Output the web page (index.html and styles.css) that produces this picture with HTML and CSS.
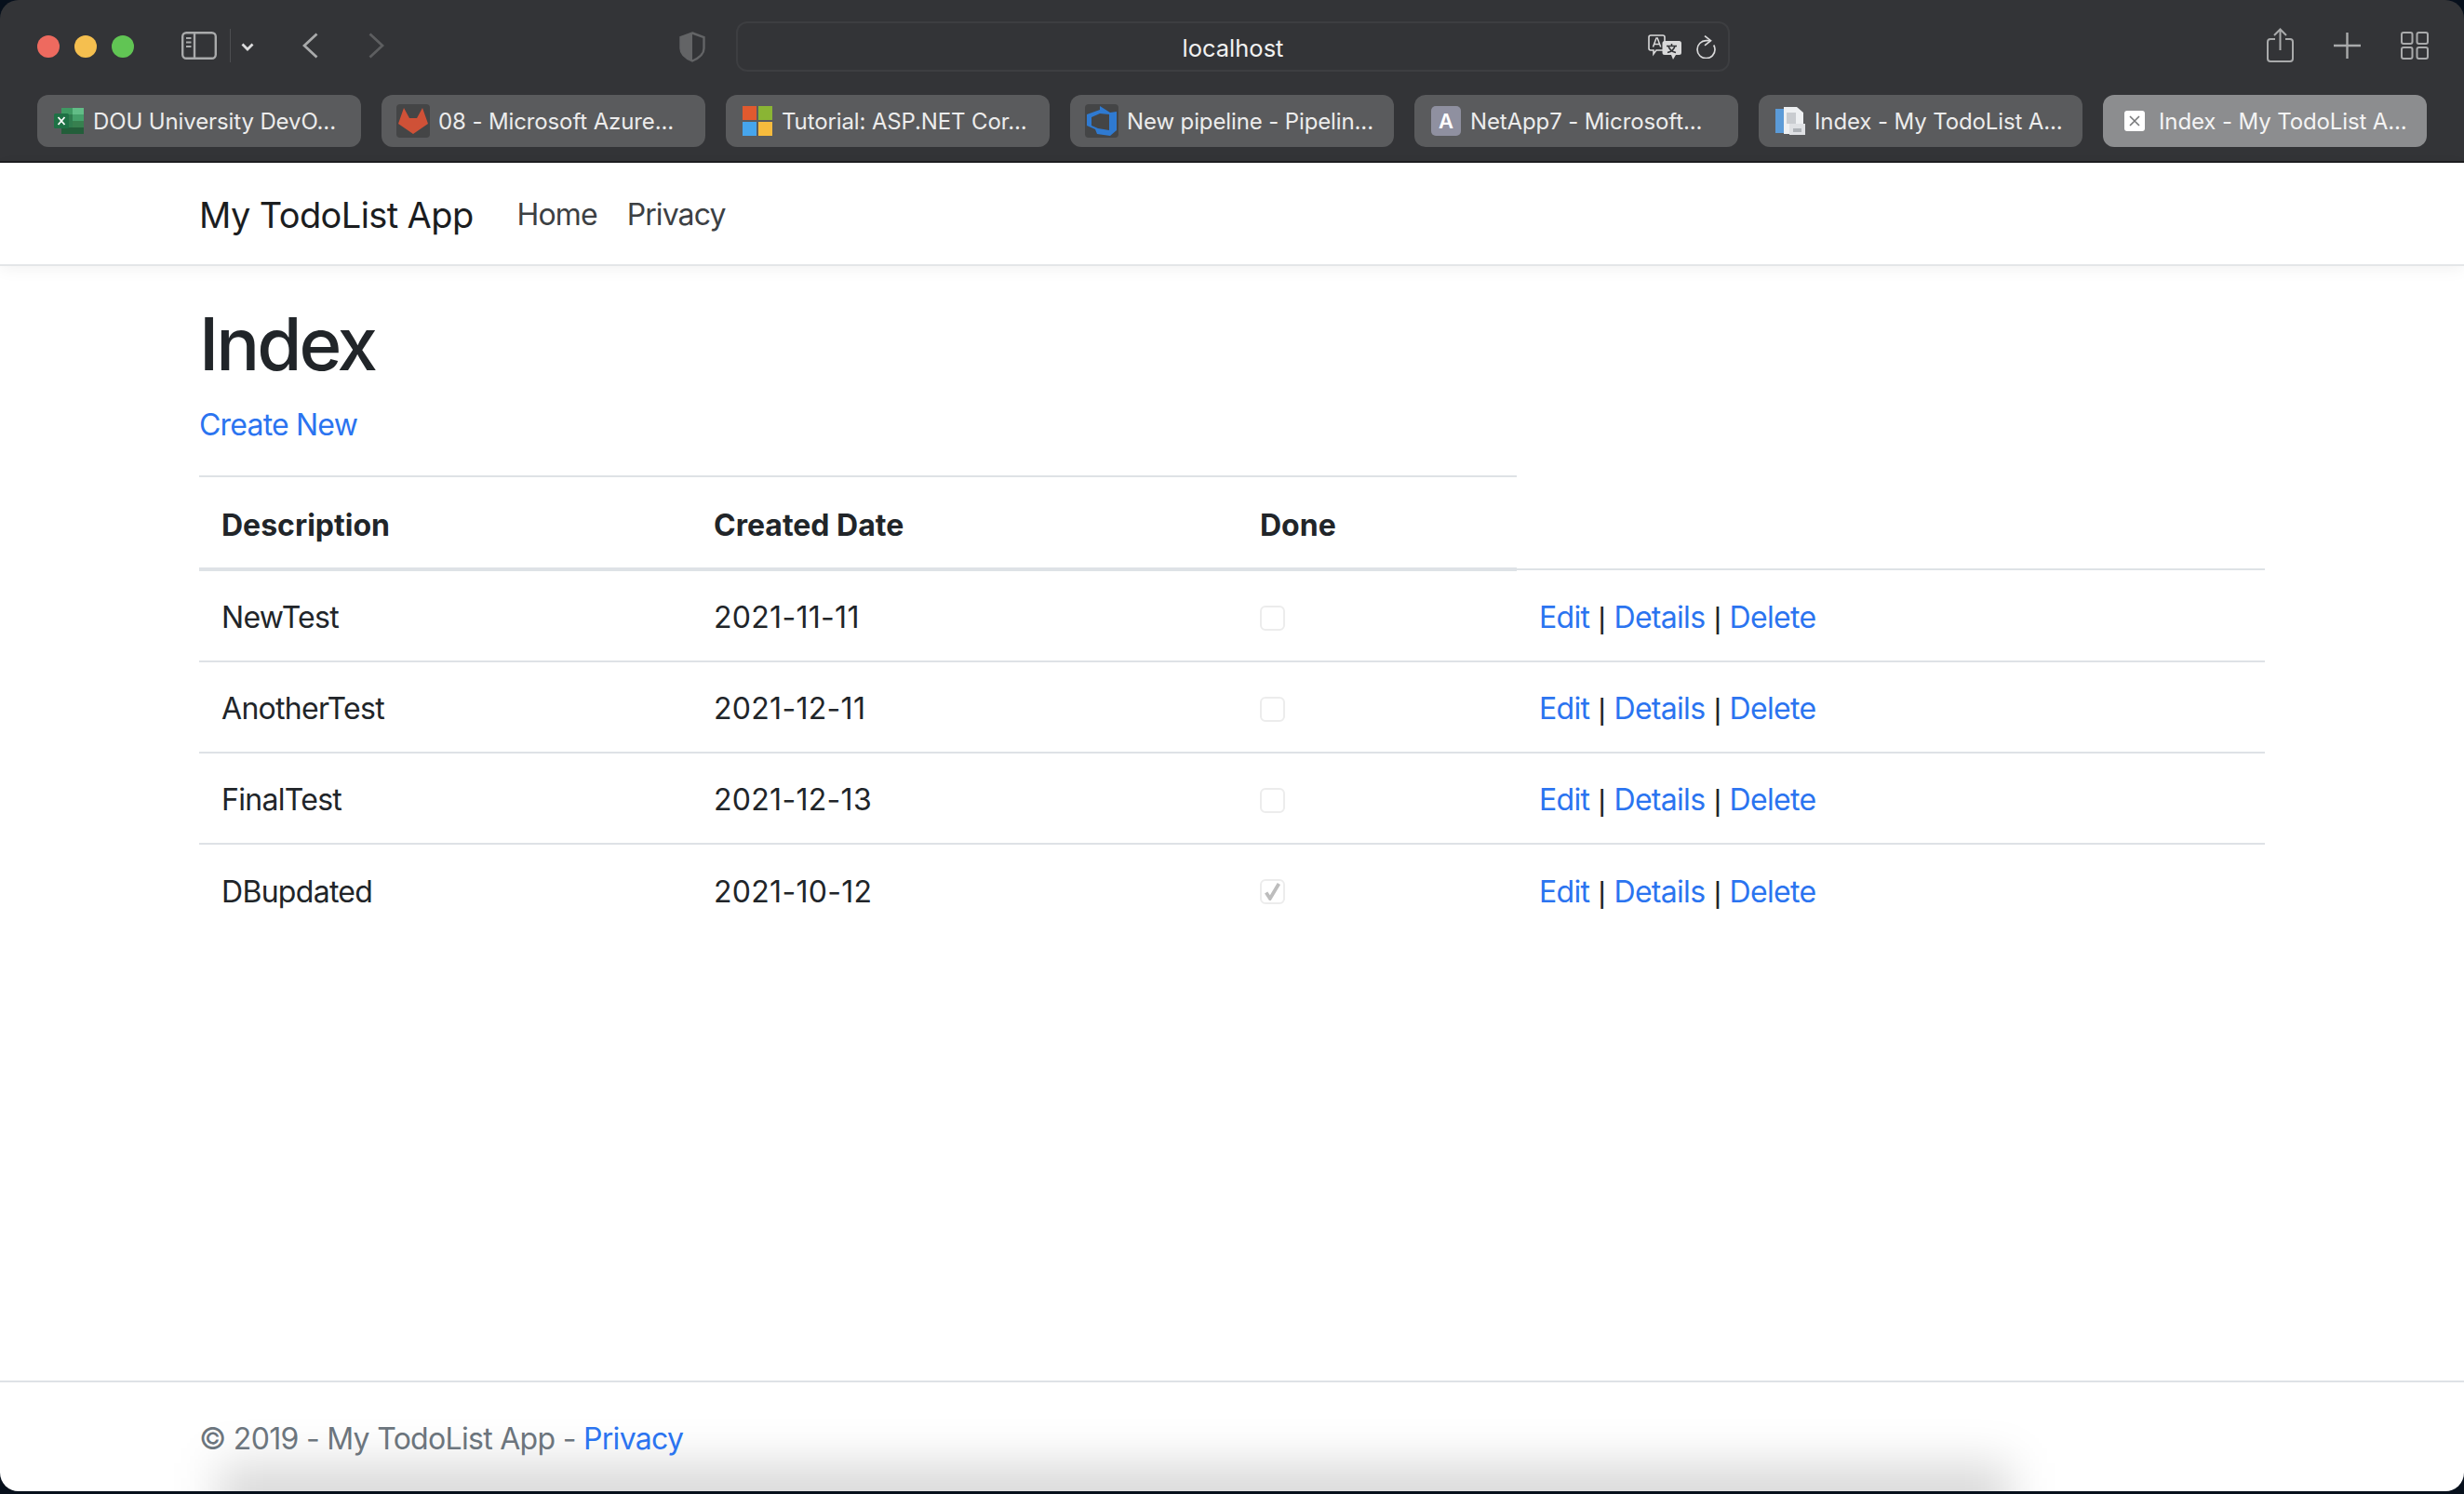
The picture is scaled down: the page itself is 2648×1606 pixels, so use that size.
FILE: index.html
```html
<!DOCTYPE html>
<html lang="en">
    <head>
        <meta charset="UTF-8">
        <title>Index - My TodoList App</title>
        <link rel="stylesheet" href="styles.css">
    </head>
    <body>
        <div class="chrome">
            <div class="toolbar">
                <div class="lights">
                    <span class="light red"></span>
                    <span class="light yellow"></span>
                    <span class="light green"></span>
                </div>
                <svg class="ico sidebar-ico" width="38" height="30" viewBox="0 0 38 30" fill="none" stroke="#a9aaab" stroke-width="2.4">
                    <rect x="1.2" y="1.2" width="35.600" height="27.600" rx="4"/>
                    <path d="M14 1v28"/>
                    <path d="M5 7h5.500M5 11.500h5.500M5 16h5.500" stroke-width="1.800"/>
                </svg>
                <span class="tool-sep"></span>
                <svg class="ico chevron-ico" width="14" height="9" viewBox="0 0 14 9" fill="none" stroke="#dcdcdd" stroke-width="2.800">
                    <path d="M1.500 1.500 7 7l5.500-5.500"/>
                </svg>
                <svg class="ico back-ico" width="17" height="28" viewBox="0 0 17 28" fill="none" stroke="#a9aaab" stroke-width="2.800">
                    <path d="M15.500 1.500 2 14l13.500 12.500"/>
                </svg>
                <svg class="ico forward-ico" width="17" height="28" viewBox="0 0 17 28" fill="none" stroke="#5d5e60" stroke-width="2.800">
                    <path d="M1.500 1.500 15 14 1.500 26.500"/>
                </svg>
                <svg class="ico shield-ico" width="28" height="33" viewBox="0 0 28 33">
                    <path d="M14 1.500 26.500 6v12c0 6-5.500 10.500-12.500 13.500C7 28.500 1.500 24 1.500 18V6z" fill="none" stroke="#636466" stroke-width="2.400"/>
                    <path d="M14 1.500V31.500C7 28.500 1.500 24 1.500 18V6z" fill="#636466"/>
                </svg>
                <div class="address">
                    <span class="address-text">localhost</span>
                    <svg class="ico translate-ico" width="36" height="27" viewBox="0 0 36 27">
                        <path d="M3 1h13a2 2 0 0 1 2 2v12a2 2 0 0 1-2 2H9l-3 4v-4H3a2 2 0 0 1-2-2V3a2 2 0 0 1 2-2z" fill="#333437" stroke="#d9d9da" stroke-width="1.600"/>
                        <path d="M5.500 13.500 9 4h1.200l3.500 9.500M6.800 10.500h5.600" fill="none" stroke="#d9d9da" stroke-width="1.500"/>
                        <path d="M18 7h15.500a2.500 2.500 0 0 1 2.500 2.500v10a2.500 2.500 0 0 1-2.500 2.500H30l-3 5-2-5h-7a2.500 2.500 0 0 1-2.500-2.500v-10A2.500 2.500 0 0 1 18 7z" fill="#d9d9da"/>
                        <path d="M20 12.500h11M25.500 10v2.500M29 12.500c-.8 3.500-4 6-8 7M22 12.500c.8 3.500 4 6 8 7" fill="none" stroke="#333437" stroke-width="1.500"/>
                    </svg>
                    <svg class="ico reload-ico" width="21" height="25" viewBox="0 0 21 25" fill="none" stroke="#d9d9da" stroke-width="1.700">
                        <path d="M15 5.700h-4.500A9.500 9.500 0 1 0 20 15a9.500 9.500 0 0 0-1.300-4.500"/>
                        <path d="M9 .6l6.500 5.100L9 10.800"/>
                    </svg>
                </div>
                <div class="right-tools">
                    <svg class="ico share-ico" width="29" height="37" viewBox="0 0 29 37" fill="none" stroke="#a9aaab" stroke-width="2">
                        <path d="M9 12H4a3 3 0 0 0-3 3v18a3 3 0 0 0 3 3h21a3 3 0 0 0 3-3V15a3 3 0 0 0-3-3h-5"/>
                        <path d="M14.500 24V2M8 8l6.500-6.500L21 8"/>
                    </svg>
                    <svg class="ico plus-ico" width="29" height="28" viewBox="0 0 29 28" fill="none" stroke="#a9aaab" stroke-width="2.400">
                        <path d="M14.500 0v28M0 14h29"/>
                    </svg>
                    <svg class="ico grid-ico" width="30" height="30" viewBox="0 0 30 30" fill="none" stroke="#a9aaab" stroke-width="2">
                        <rect x="1" y="1" width="11.500" height="12" rx="2"/>
                        <rect x="17.500" y="1" width="11.500" height="12" rx="2"/>
                        <rect x="1" y="17" width="11.500" height="12" rx="2"/>
                        <rect x="17.500" y="17" width="11.500" height="12" rx="2"/>
                    </svg>
                </div>
            </div>
            <div class="tabs">
                <div class="tab">
                    <svg class="fav" width="32" height="28" viewBox="0 0 32 28">
                        <rect x="8" width="24" height="28" rx="1.500" fill="#2f7d4f"/>
                        <rect x="20" width="12" height="7" fill="#62bd87"/>
                        <rect x="8" width="12" height="7" fill="#3f9a63"/>
                        <rect x="20" y="7" width="12" height="7" fill="#45a06a"/>
                        <rect x="20" y="14" width="12" height="7" fill="#37804f"/>
                        <rect x="8" y="21" width="24" height="7" fill="#235e3a"/>
                        <rect y="6" width="16" height="16" rx="1.500" fill="#1e7145"/>
                        <path d="M4.500 10l7 8M11.500 10l-7 8" stroke="#fff" stroke-width="1.800"/>
                    </svg>
                    <span class="tab-title">DOU University DevO...</span>
                </div>
                <div class="tab tab-tile">
                    <svg class="fav" width="36" height="36" viewBox="0 0 36 36">
                        <rect width="36" height="36" rx="4" fill="#444546"/>
                        <path d="M8 4 14 15h8L28 4l6 17-16 11L2 21z" fill="#cf5137"/>
                    </svg>
                    <span class="tab-title">08 - Microsoft Azure...</span>
                </div>
                <div class="tab">
                    <svg class="fav" width="32" height="32" viewBox="0 0 32 32">
                        <rect width="15" height="15" fill="#e05a2f"/>
                        <rect x="17" width="15" height="15" fill="#8ab534"/>
                        <rect y="17" width="15" height="15" fill="#46a5ec"/>
                        <rect x="17" y="17" width="15" height="15" fill="#f6bb3d"/>
                    </svg>
                    <span class="tab-title">Tutorial: ASP.NET Cor...</span>
                </div>
                <div class="tab tab-tile">
                    <svg class="fav" width="36" height="36" viewBox="0 0 36 36">
                        <rect width="36" height="36" rx="4" fill="#444546"/>
                        <path fill-rule="evenodd" d="M16 2 27 9l7-1v20l-7 6-14-2-2-5-9-4V11l14-5zM7 14v9l7 3 12 2V11l-10-1z" fill="#2f7ad1"/>
                    </svg>
                    <span class="tab-title">New pipeline - Pipelin...</span>
                </div>
                <div class="tab">
                    <span class="fav fav-letter">A</span>
                    <span class="tab-title">NetApp7 - Microsoft...</span>
                </div>
                <div class="tab">
                    <svg class="fav" width="32" height="32" viewBox="0 0 32 32">
                        <path d="M0 3h9v26H0z" fill="#5b9bd8"/>
                        <path d="M9 1h14l7 6v14H20v9H9z" fill="#eef0f2"/>
                        <path d="M12 7h10v12H12z" fill="#c9ccd0"/>
                        <rect x="15" y="19" width="17" height="12" fill="#dfe1e4"/>
                        <rect x="19" y="24" width="9" height="4" fill="#aeb2b7"/>
                    </svg>
                    <span class="tab-title">Index - My TodoList A...</span>
                </div>
                <div class="tab tab-active">
                    <span class="fav fav-close">
                        <svg width="12" height="12" viewBox="0 0 12 12" fill="none" stroke="#77787a" stroke-width="1.600">
                            <path d="M1 1l10 10M11 1 1 11"/>
                        </svg>
                    </span>
                    <span class="tab-title">Index - My TodoList A...</span>
                </div>
            </div>
        </div>
        <header class="navbar">
            <a class="brand">My TodoList App</a>
            <a class="nav-link">Home</a>
            <a class="nav-link">Privacy</a>
        </header>
        <main class="content">
            <h1>Index</h1>
            <p class="create"><a>Create New</a></p>
            <table class="todo">
                <thead>
                    <tr>
                        <th class="col-desc">Description</th>
                        <th class="col-date">Created Date</th>
                        <th class="col-done">Done</th>
                        <th class="col-actions"></th>
                    </tr>
                </thead>
                <tbody>
                    <tr>
                        <td>NewTest</td>
                        <td class="date">2021-11-11</td>
                        <td><span class="check"></span></td>
                        <td><a>Edit</a> <span class="sep">|</span> <a>Details</a> <span class="sep">|</span> <a>Delete</a></td>
                    </tr>
                    <tr>
                        <td>AnotherTest</td>
                        <td class="date">2021-12-11</td>
                        <td><span class="check"></span></td>
                        <td><a>Edit</a> <span class="sep">|</span> <a>Details</a> <span class="sep">|</span> <a>Delete</a></td>
                    </tr>
                    <tr>
                        <td>FinalTest</td>
                        <td class="date">2021-12-13</td>
                        <td><span class="check"></span></td>
                        <td><a>Edit</a> <span class="sep">|</span> <a>Details</a> <span class="sep">|</span> <a>Delete</a></td>
                    </tr>
                    <tr>
                        <td>DBupdated</td>
                        <td class="date">2021-10-12</td>
                        <td>
                            <span class="check">
                                <svg width="19" height="19" viewBox="0 0 18 18" fill="none" stroke="#bdbdbd" stroke-width="3.600">
                                    <path d="M2.500 10l4 6L15.500 1"/>
                                </svg>
                            </span>
                        </td>
                        <td><a>Edit</a> <span class="sep">|</span> <a>Details</a> <span class="sep">|</span> <a>Delete</a></td>
                    </tr>
                </tbody>
            </table>
        </main>
        <footer class="footer">
            <div class="footer-shadow"></div>
            <span class="footer-text">&copy; 2019 - My TodoList App - <a>Privacy</a></span>
        </footer>
    </body>
</html>
```

FILE: styles.css
```css
* {
    box-sizing: border-box;
}
html, body {
    height: 100%;
}
body {
    margin: 0;
    padding-bottom: 3px;
    display: flex;
    flex-direction: column;
    background-color: #07101c;
    color: #212529;
    font-family: "Inter", "Liberation Sans", sans-serif;
    font-size: 32px;
    line-height: 48px;
    letter-spacing: -0.7px;
    overflow: hidden;
}
a {
    color: #2b74f0;
}
.ico, .fav {
    flex-shrink: 0;
    display: block;
}

/* browser chrome */
.chrome {
    height: 175px;
    background-color: #333437;
    border-bottom: 2px solid #1d1e20;
    border-radius: 20px 20px 0 0;
    letter-spacing: 0;
}
.toolbar {
    height: 100px;
    display: flex;
    align-items: center;
    padding-left: 40px;
}
.lights {
    display: flex;
    gap: 16px;
}
.light {
    width: 24px;
    height: 24px;
    border-radius: 50%;
}
.red {
    background-color: #ee6a5f;
}
.yellow {
    background-color: #f5bf4f;
}
.green {
    background-color: #61c554;
}
.sidebar-ico {
    margin: 0 0 3px 51px;
}
.tool-sep {
    width: 1px;
    height: 36px;
    margin: 0 0 2px 14px;
    background-color: #4d4e51;
}
.chevron-ico {
    margin-left: 11px;
}
.back-ico {
    margin: 0 0 2px 52px;
}
.forward-ico {
    margin: 0 0 2px 54px;
}
.shield-ico {
    margin-left: 317px;
}
.address {
    width: 1068px;
    height: 54px;
    margin-left: 33px;
    padding-right: 13px;
    display: flex;
    align-items: center;
    justify-content: flex-end;
    gap: 16px;
    position: relative;
    border: 2px solid #3d3e41;
    border-radius: 12px;
}
.address-text {
    position: absolute;
    top: 3px;
    left: 0;
    right: 0;
    text-align: center;
    color: #f1f1f1;
    font-size: 25.5px;
}
.right-tools {
    margin: 0 0 3px auto;
    padding-right: 38px;
    display: flex;
    align-items: center;
    gap: 43px;
}
.tabs {
    display: flex;
    gap: 22px;
    padding: 2px 40px 0;
}
.tab {
    width: 348px;
    height: 56px;
    padding-left: 18px;
    display: flex;
    align-items: center;
    gap: 10px;
    border-radius: 12px;
    background-color: #5a5b5d;
    color: #ececec;
    font-size: 24px;
    line-height: 30px;
    letter-spacing: -0.12px;
    white-space: nowrap;
}
.tab-title {
    padding-top: 2px;
}
.tab-tile {
    padding-left: 16px;
    gap: 9px;
}
.tab-active {
    padding-left: 23px;
    gap: 15px;
    background-color: #8c8d8f;
    color: #f4f4f4;
}
.fav-letter {
    width: 32px;
    height: 32px;
    border-radius: 5px;
    background-color: #8f90a0;
    color: #fff;
    font-size: 22px;
    line-height: 32px;
    font-weight: 600;
    text-align: center;
}
.fav-close {
    width: 22px;
    height: 22px;
    border-radius: 3px;
    background-color: #fff;
    display: flex;
    align-items: center;
    justify-content: center;
}

/* site navbar */
.navbar {
    height: 111px;
    padding: 2px 214px 0;
    display: flex;
    align-items: center;
    background-color: #fff;
    border-bottom: 2px solid #e4e6e8;
    box-shadow: 0 4px 16px rgba(0, 0, 0, 0.05);
    position: relative;
}
.brand {
    margin-right: 47px;
    color: #1b1d1f;
    font-size: 38px;
    letter-spacing: -0.6px;
}
.nav-link {
    margin-right: 32px;
    color: #3c4043;
    letter-spacing: -0.9px;
}

/* table page */
.content {
    flex: 1;
    padding: 0 214px;
    background-color: #fff;
}
h1 {
    margin: 36px 0 15px;
    font-size: 78px;
    line-height: 96px;
    font-weight: 500;
    letter-spacing: -3px;
}
.create {
    margin: 0 0 30px;
}
.create a {
    letter-spacing: -0.8px;
}
.todo {
    width: 100%;
    table-layout: fixed;
    border-collapse: collapse;
}
.todo th, .todo td {
    text-align: left;
    vertical-align: middle;
}
.todo th {
    height: 100px;
    padding: 27px 24px 21px;
    font-weight: 700;
    letter-spacing: 0;
    border-top: 2px solid #dee2e6;
    border-bottom: 4px solid #dee2e6;
}
.todo td {
    height: 98px;
    padding: 26px 24px 22px;
    border-bottom: 2px solid #dee2e6;
}
.todo td.date {
    letter-spacing: 0.3px;
}
.todo tbody tr:last-child td {
    border-bottom: 0;
}
.todo th.col-actions {
    border-top: 0;
    border-bottom: 2px solid #dee2e6;
}
.col-desc {
    width: 529px;
}
.col-date {
    width: 587px;
}
.col-done {
    width: 300px;
}
.check {
    width: 27px;
    height: 27px;
    display: flex;
    align-items: center;
    justify-content: center;
    border: 2px solid #ececec;
    border-radius: 6px;
    background-color: #fff;
}
.sep {
    margin: 0 1px;
    font-family: "Liberation Sans", sans-serif;
}

/* footer */
.footer {
    height: 119px;
    padding: 4px 214px 0;
    display: flex;
    align-items: center;
    position: relative;
    overflow: hidden;
    background-color: #fff;
    border-top: 2px solid #dee2e6;
    border-radius: 0 0 20px 20px;
    color: #6c757d;
}
.footer-text {
    position: relative;
}
.footer-shadow {
    position: absolute;
    left: 235px;
    right: 488px;
    bottom: -40px;
    height: 70px;
    background-color: rgba(0, 0, 0, 0.15);
    filter: blur(24px);
}
```
